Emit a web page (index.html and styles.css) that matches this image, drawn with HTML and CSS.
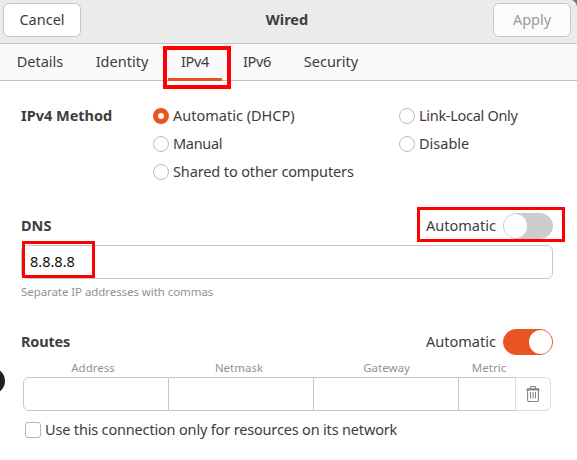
FILE: index.html
```html
<!DOCTYPE html>
<html lang="en">
<head>
<meta charset="utf-8">
<title>Wired</title>
<link rel="stylesheet" href="styles.css">
</head>
<body>
<div class="dialog">
  <header class="titlebar">
    <button class="btn">Cancel</button>
    <h1>Wired</h1>
    <button class="btn disabled" disabled>Apply</button>
    <svg class="corner" width="6" height="6" viewBox="0 0 6 6"><path d="M1 0h5v6C5 3 3.500 1 1 0z" fill="#777"/></svg>
  </header>
  <nav class="tabs">
    <a class="tab details">Details</a>
    <a class="tab identity">Identity</a>
    <a class="tab ip active">IPv4<span class="mark mark-tab"></span></a>
    <a class="tab ip ipv6">IPv6</a>
    <a class="tab security">Security</a>
  </nav>
  <main class="page">
    <section class="method">
      <h2>IPv4 Method</h2>
      <div class="choices">
        <label class="choice"><i class="radio on"></i><span>Automatic (DHCP)</span></label>
        <label class="choice"><i class="radio"></i><span class="link-local">Link-Local Only</span></label>
        <label class="choice"><i class="radio"></i><span class="manual">Manual</span></label>
        <label class="choice"><i class="radio"></i><span>Disable</span></label>
        <label class="choice"><i class="radio"></i><span class="shared">Shared to other computers</span></label>
      </div>
    </section>
    <section class="dns">
      <div class="row">
        <h2>DNS</h2>
        <div class="auto"><span>Automatic</span><i class="switch"></i><span class="mark mark-switch"></span></div>
      </div>
      <div class="entry"><span>8.8.8.8</span><span class="mark mark-entry"></span></div>
      <p class="hint">Separate IP addresses with commas</p>
    </section>
    <section class="routes">
      <div class="row">
        <h2 class="routes-title">Routes</h2>
        <div class="auto"><span>Automatic</span><i class="switch on"></i></div>
      </div>
      <div class="grid heads"><span>Address</span><span>Netmask</span><span>Gateway</span><span>Metric</span></div>
      <div class="grid cells">
        <div class="cell first"></div><div class="cell"></div><div class="cell"></div><div class="cell"></div>
        <div class="cell remove">
          <svg width="14" height="16" viewBox="0 0 14 16" fill="none" stroke="#858585" stroke-width="1.100"><path d="M4.500 3V1.500Q4.500.5 5.500.5h3q1 0 1 1V3"/><path d="M.5 4.500V3.500Q1 2.300 2 2.300h10q1 0 1.500 1.200v1z" fill="#858585" stroke="none"/><path d="M1.600 4v10q0 1.500 1.500 1.500h7.800q1.500 0 1.500-1.500V4"/><path d="M4.500 6v6.500M7 6v6.500M9.500 6v6.500"/></svg>
        </div>
      </div>
      <label class="only"><i class="check"></i><span>Use this connection only for resources on its network</span></label>
    </section>
  </main>
  <i class="edge-dot"></i>
</div>
</body>
</html>
```
FILE: styles.css
```css
* { box-sizing: border-box; }
body {
  margin: 0;
  font-family: "Noto Sans", "Open Sans", sans-serif;
  font-size: 14.5px;
  line-height: 18px;
  color: #3d3d3d;
  background: #fff;
}
h1, h2, p { margin: 0; font-size: 14.5px; line-height: 18px; }
span, a, h1, h2, p { white-space: nowrap; }
.dialog { position: relative; width: 577px; height: 460px; overflow: hidden; }

.titlebar {
  position: relative;
  display: flex;
  justify-content: space-between;
  height: 44px;
  padding: 3px 6px 0 3px;
  background: #ebebeb;
  border-bottom: 1px solid #bfbfbf;
}
.titlebar h1 { padding-top: 7px; }
.btn {
  width: 78px;
  height: 34px;
  padding: 0 0 2px;
  font: inherit;
  color: #3d3d3d;
  background: #fff;
  border: 1px solid #c6c6c6;
  border-radius: 6px;
}
.btn.disabled { color: #9b9b9b; background: #fcfcfc; }
.corner { position: absolute; top: 0; right: 0; }

.tabs {
  display: flex;
  gap: 7px;
  height: 37px;
  padding-left: 4px;
  background: #fafafa;
  border-bottom: 1px solid #c4c4c4;
}
.tab { position: relative; height: 37px; padding-top: 8px; text-align: center; }
.details { width: 72px; }
.identity { width: 78px; }
.ip { width: 54px; letter-spacing: -.3px; }
.ipv6 { margin-left: 1px; }
.security { width: 80px; }
.active { border-bottom: 3px solid #e95420; }

.mark { position: absolute; border: 3px solid #f00; }
.mark-tab { left: -5px; top: 2px; width: 68px; height: 43px; border-width: 4px; }
.mark-switch { left: -9px; top: -6px; width: 148px; height: 35px; }
.mark-entry { left: 0; top: -5px; width: 73px; height: 37px; }

.page { padding: 25px 24px 0 21px; }
.method { display: flex; height: 107px; }
.method h2 { width: 132px; }
.choices {
  display: grid;
  grid-template-columns: 246px 140px;
  grid-auto-rows: 28px;
}
.choice { display: flex; gap: 4px; }
.link-local { letter-spacing: -.3px; }
.manual { letter-spacing: -.3px; }
.shared { letter-spacing: -.12px; }
.radio {
  width: 16px;
  height: 16px;
  margin-top: 2px;
  border: 1px solid #bdbdbd;
  border-radius: 50%;
}
.radio.on { border: 5.5px solid #e95420; }

.row { display: flex; justify-content: space-between; height: 26px; }
.row h2 { padding-top: 3px; }
.routes-title { letter-spacing: -.2px; }
.auto { position: relative; display: flex; width: 127px; justify-content: space-between; }
.auto > span:first-child { padding-top: 3px; }
.switch {
  width: 50px;
  height: 26px;
  border: 1px solid #c8c8c8;
  border-radius: 13px;
  background: #cdcdcd;
}
.switch::before {
  content: "";
  display: block;
  width: 23px;
  height: 24px;
  border-radius: 50%;
  background: #fff;
}
.switch.on { background: #e95420; border-color: #e95420; }
.switch.on::before { margin-left: 25px; }

.dns { height: 116px; }
.entry {
  position: relative;
  height: 34px;
  margin-top: 6px;
  padding: 6px 0 0 8px;
  border: 1px solid #c6c6c6;
  border-radius: 6px;
  color: #111;
}
.hint { padding-top: 4px; font-size: 11.5px; letter-spacing: -.07px; color: #929292; }

.grid {
  display: grid;
  grid-template-columns: 146px 145px 145px 57px 35px;
  width: 528px;
  margin-left: 2px;
}
.heads { height: 22px; padding-top: 4px; font-size: 11.5px; color: #929292; text-align: center; }
.heads span:first-child { padding-right: 6px; }
.heads span:nth-child(2) { padding-right: 5px; }
.heads span:nth-child(4) { padding-left: 3px; }
.cells { height: 34px; }
.cell { border: 1px solid #c6c6c6; border-left: 0; }
.cell.first { border-left: 1px solid #c6c6c6; border-radius: 6px 0 0 6px; }
.cell:nth-child(4) { border-right-color: #dedede; }
.cell.remove {
  display: flex;
  align-items: center;
  justify-content: center;
  border-color: #dedede;
  border-radius: 0 6px 6px 0;
}
.only { display: flex; gap: 4px; margin: 9px 0 0 2px; padding-left: 2px; letter-spacing: -.17px; }
.check {
  width: 16px;
  height: 16px;
  margin-top: 2px;
  border: 1px solid #b6b6b6;
  border-radius: 3px;
}
.edge-dot {
  position: absolute;
  left: -21px;
  top: 368px;
  width: 26px;
  height: 26px;
  border-radius: 50%;
  background: #202020;
}
```
